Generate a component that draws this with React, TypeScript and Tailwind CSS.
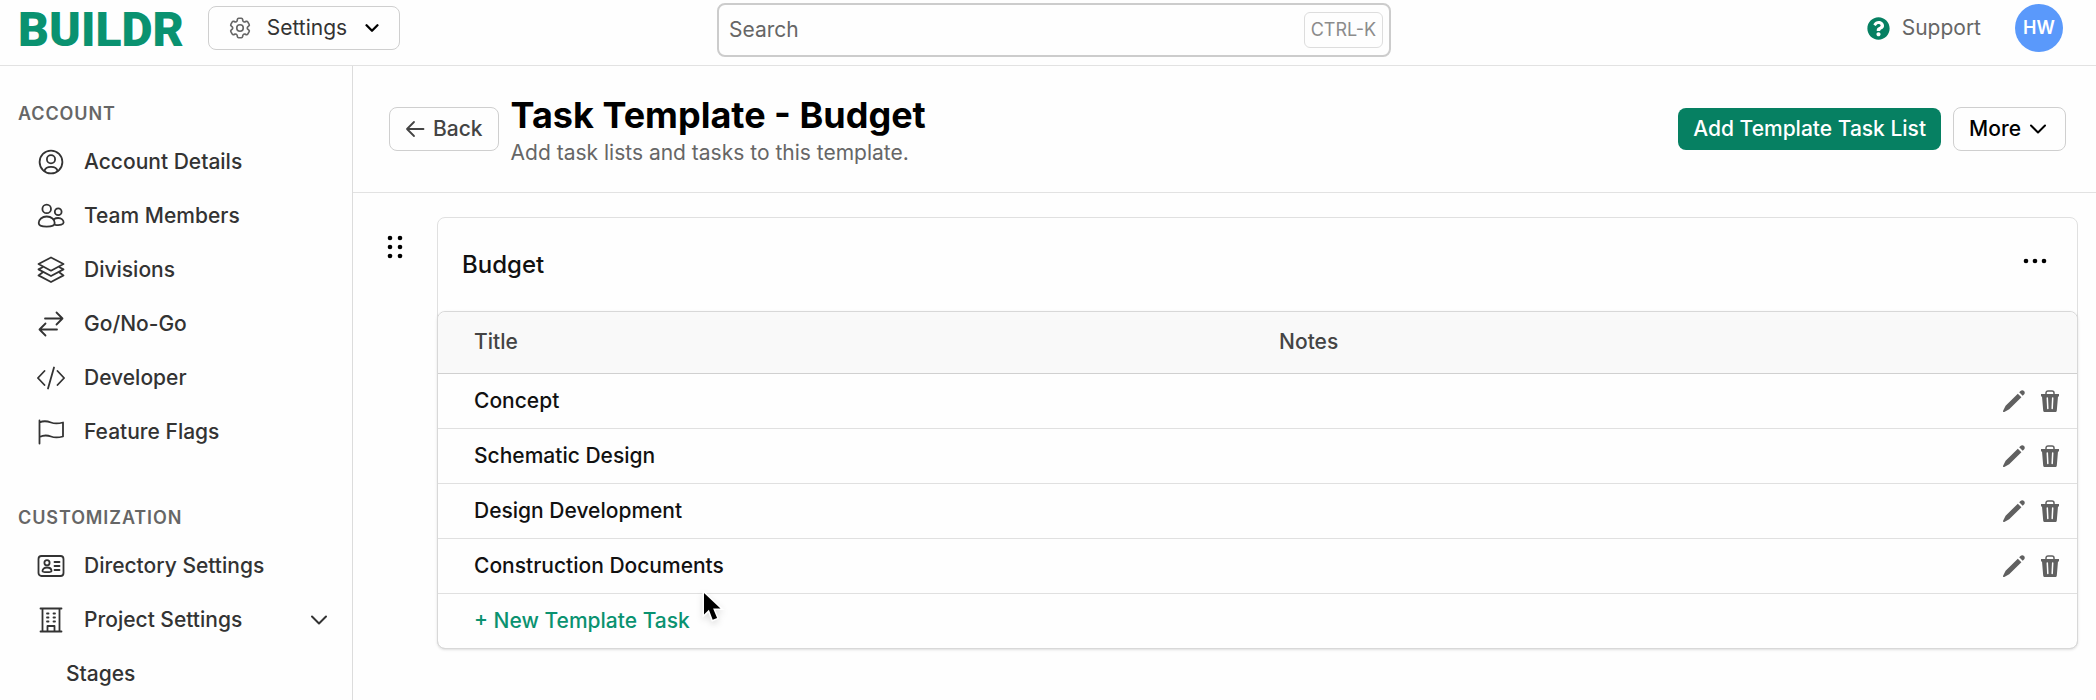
import { type ReactNode } from "react";
import { FaQuestionCircle } from "react-icons/fa";
import { HiOutlineCog6Tooth } from "react-icons/hi2";

interface NavItem {
  label: string;
  icon: ReactNode;
  expandable?: boolean;
}

interface IconProps {
  children: ReactNode;
}

function NavIcon({ children }: IconProps) {
  return (
    <svg
      viewBox="0 0 28 28"
      className="size-7 shrink-0"
      fill="none"
      stroke="currentColor"
      strokeWidth="1.8"
      strokeLinecap="round"
      strokeLinejoin="round"
      aria-hidden="true"
    >
      {children}
    </svg>
  );
}

function ChevronDown({ className }: { className: string }) {
  return (
    <svg
      viewBox="0 0 18 18"
      className={className}
      fill="none"
      stroke="currentColor"
      strokeLinecap="round"
      strokeLinejoin="round"
      aria-hidden="true"
    >
      <path d="M2 5.5l7 7 7-7" />
    </svg>
  );
}

const accountItems: NavItem[] = [
  {
    label: "Account Details",
    icon: (
      <NavIcon>
        <circle cx="14" cy="14" r="11.4" />
        <circle cx="14" cy="11.2" r="4.1" />
        <path d="M7.4 23c.6-2.7 3.2-4.2 6.6-4.2s6 1.5 6.6 4.2" />
      </NavIcon>
    ),
  },
  {
    label: "Team Members",
    icon: (
      <NavIcon>
        <circle cx="9.7" cy="6.9" r="4.3" />
        <circle cx="21.2" cy="9.7" r="3.4" />
        <path d="M9.7 14.5c-4.8 0-8 3-8 6.6 0 2.3 3.6 3.6 8 3.6s8-1.3 8-3.6c0-3.6-3.200-6.600-8-6.600z" />
        <path d="M16.8 17.3c1.2-.8 2.7-1.3 4.4-1.3 3.2 0 5.4 2.1 5.4 4.6 0 2-3.4 2.9-8.4 2.3" />
      </NavIcon>
    ),
  },
  {
    label: "Divisions",
    icon: (
      <NavIcon>
        <path d="M14 1.5L26.5 8 14 14.7 1.5 8z" />
        <path d="M5.5 11.2L1.5 13.400 14 20l12.500-6.600-4-2.200" />
        <path d="M5.5 16.6L1.5 19.400 14 26l12.500-6.600-4-2.800" />
      </NavIcon>
    ),
  },
  {
    label: "Go/No-Go",
    icon: (
      <NavIcon>
        <path d="M8 8.500h17.500M19.500 2.500l6 6-6 6" />
        <path d="M20 19.500H2.500M8.500 13.500l-6 6 6 6" />
      </NavIcon>
    ),
  },
  {
    label: "Developer",
    icon: (
      <NavIcon>
        <path d="M7.500 7L.9 14l6.600 7M20.500 7l6.600 7-6.600 7M17 3.500l-6 21" />
      </NavIcon>
    ),
  },
  {
    label: "Feature Flags",
    icon: (
      <NavIcon>
        <path d="M2.500 2.500v23M2.500 4.500c4-2 7.500-1.500 11.500 0s8 1 12 0v14c-4 1-8 1.500-12 0s-7.500-1.500-11.500.5" />
      </NavIcon>
    ),
  },
];

const customizationItems: NavItem[] = [
  {
    label: "Directory Settings",
    icon: (
      <NavIcon>
        <rect x="1.5" y="4" width="25" height="20" rx="3" />
        <circle cx="10" cy="10.7" r="2.6" />
        <path d="M10 15.500c-2.600 0-4.500 1.300-4.500 3.400 0 .9 2 1.200 4.500 1.200s4.500-.3 4.500-1.200c0-2.100-1.900-3.400-4.500-3.400z" />
        <path d="M17.500 10h5M17.500 14h5M17.500 18h5" />
      </NavIcon>
    ),
  },
  {
    label: "Project Settings",
    expandable: true,
    icon: (
      <NavIcon>
        <path d="M3.500 2.500h21M3.500 25.500h21M5.500 2.500v23M22.500 2.500v23M10.500 25v-5h7v5" />
        <path d="M10 7.500h1.500M16.500 7.500H18M10 11.500h1.500M16.500 11.500H18M10 15.500h1.500M16.500 15.500H18" />
      </NavIcon>
    ),
  },
];

const tasks = ["Concept", "Schematic Design", "Design Development", "Construction Documents"];

function NavSection({ title, items, children }: { title: string; items: NavItem[]; children?: ReactNode }) {
  return (
    <section>
      <h2 className="pl-[18px] text-lg leading-6 font-semibold tracking-wider text-[#666] uppercase">{title}</h2>
      <ul className="mt-[9px]">
        {items.map((item) => (
          <li key={item.label}>
            <a href="#" className="flex h-[54px] items-center gap-[19px] pr-6 pl-[37px]">
              {item.icon}
              <span className="flex-1">{item.label}</span>
              {item.expandable && <ChevronDown className="size-[18px] stroke-2" />}
            </a>
          </li>
        ))}
        {children}
      </ul>
    </section>
  );
}

function TopBar() {
  return (
    <header className="flex h-[66px] items-start border-b border-[#e2e2e2] pr-1.5 pl-[18px]">
      <div className="flex h-14 flex-1 items-center gap-6">
        <a href="#" className="pt-1 font-[Roboto,sans-serif] text-5xl leading-none font-black text-[#0a9270]">
          BUILDR
        </a>
        <button className="flex h-11 items-center rounded-lg border border-[#cfcfcf] pr-5 pl-[18px] text-[#333]">
          <HiOutlineCog6Tooth className="size-[26px] text-[#666]" />
          <span className="ml-3.5">Settings</span>
          <ChevronDown className="ml-[18px] size-3.5 stroke-3 text-black" />
        </button>
      </div>

      <div className="mt-[3px] flex h-[54px] w-[674px] items-center rounded-lg border-2 border-[#ccc] pr-1.5 pl-2.5">
        <input
          type="text"
          aria-label="Search"
          placeholder="Search"
          className="min-w-0 flex-1 bg-transparent outline-none placeholder:text-[#666]"
        />
        <kbd className="flex h-9 items-center rounded-md border border-[#ddd] px-1.5 font-[Inter,sans-serif] text-lg text-[#8c8c8c]">
          CTRL-K
        </kbd>
      </div>

      <div className="flex h-14 flex-1 items-center justify-end">
        <a href="#" className="flex items-center gap-3 text-[#666]">
          <FaQuestionCircle className="size-[23px] text-[#068062]" />
          Support
        </a>
        <button className="mr-[27px] ml-[34px] size-12 rounded-full bg-[#5a99fb] text-lg font-semibold text-white">
          HW
        </button>
      </div>
    </header>
  );
}

function Sidebar() {
  return (
    <nav className="w-[353px] shrink-0 space-y-[47px] border-r border-[#dcdcdc] pt-9 font-medium text-[#333]">
      <NavSection title="Account" items={accountItems} />
      <NavSection title="Customization" items={customizationItems}>
        <li>
          <a href="#" className="flex h-[54px] items-center pl-[66px]">
            Stages
          </a>
        </li>
      </NavSection>
    </nav>
  );
}

function PageHeader() {
  return (
    <div className="flex h-[127px] items-center gap-3 border-b border-[#e2e2e2] pr-[30px] pl-9">
      <button className="flex h-11 items-center gap-2 rounded-lg border border-[#cfcfcf] px-[15px] font-medium text-[#444]">
        <svg
          viewBox="0 0 20 20"
          className="size-5"
          fill="none"
          stroke="currentColor"
          strokeWidth="1.8"
          strokeLinecap="round"
          strokeLinejoin="round"
          aria-hidden="true"
        >
          <path d="M18.500 10H2M9 3l-7 7 7 7" />
        </svg>
        Back
      </button>
      <div className="flex-1 pt-1">
        <h1 className="text-4xl font-bold text-black">Task Template - Budget</h1>
        <p className="mt-1 text-[#666]">Add task lists and tasks to this template.</p>
      </div>
      <button className="h-[42px] rounded-lg bg-[#068062] px-[15px] font-medium text-white">
        Add Template Task List
      </button>
      <button className="flex h-11 items-center gap-2 rounded-lg border border-[#cfcfcf] pr-[18px] pl-[15px] font-medium text-black">
        More
        <ChevronDown className="size-[18px] stroke-2" />
      </button>
    </div>
  );
}

function PencilIcon() {
  return (
    <svg viewBox="0 0 24 24" className="size-6" fill="currentColor" aria-hidden="true">
      <path d="M15.800 4.700l3.600 3.600L7.200 20.300 2.300 22.900c-.8.400-1.600-.4-1.200-1.200l2.500-5z" />
      <path d="M17.200 3.300l1.300-1.300c1-1 2.500-1 3.500 0s1 2.500 0 3.500l-1.300 1.300z" />
    </svg>
  );
}

function TrashIcon() {
  return (
    <svg viewBox="0 0 20 24" className="h-6 w-5" aria-hidden="true">
      <path d="M6 5.500V4c0-1.300.8-2 2-2h4c1.200 0 2 .7 2 2v1.500" fill="none" stroke="currentColor" strokeWidth="1.5" />
      <path
        d="M1 5h18v2.500h-1l-1.200 14c-.1 1-.8 1.500-1.700 1.500H4.900c-.9 0-1.600-.5-1.700-1.500L2 7.500H1z"
        fill="currentColor"
      />
      <path d="M7.300 9l.5 10.500M12.700 9l-.5 10.500" stroke="#fefefe" strokeWidth="1.500" strokeLinecap="round" />
    </svg>
  );
}

function CursorIcon() {
  return (
    <svg
      viewBox="0 0 24 36"
      className="absolute -top-1 left-[264px] h-9 w-6 drop-shadow-md [paint-order:stroke]"
      stroke="white"
      strokeWidth="3"
      aria-hidden="true"
    >
      <path d="M2 3v21.500l4.900-4.700 3.800 10 4.400-1.800-4-9.500h7.400z" />
    </svg>
  );
}

function TaskListCard() {
  return (
    <section className="flex-1 rounded-lg border border-[#e0e0e0]">
      <div className="flex h-[93px] items-center justify-between pr-7 pl-6">
        <h2 className="text-2xl font-medium text-[#111]">Budget</h2>
        <button aria-label="Task list actions" className="mb-2">
          <svg viewBox="0 0 28 12" className="h-3 w-7" aria-hidden="true">
            <circle cx="5" cy="6" r="2.3" />
            <circle cx="14" cy="6" r="2.3" />
            <circle cx="23" cy="6" r="2.3" />
          </svg>
        </button>
      </div>

      <div className="-mx-px -mb-px rounded-lg border border-[#d8d8d8] shadow-sm">
        <table className="w-full table-fixed text-left font-medium">
          <thead>
            <tr className="h-[61px] border-b border-[#d0d0d0] bg-[#f9f9f9] text-[#444]">
              <th className="w-[49%] rounded-tl-lg pl-9 font-medium">Title</th>
              <th className="pl-[38px] font-medium">Notes</th>
              <th className="w-[100px] rounded-tr-lg" aria-label="Actions" />
            </tr>
          </thead>
          <tbody className="text-[#111]">
            {tasks.map((task) => (
              <tr key={task} className="h-[55px] border-b border-[#e0e0e0]">
                <td className="pl-9">{task}</td>
                <td />
                <td>
                  <div className="flex justify-end gap-3.5 pr-[17px] text-[#606060]">
                    <button aria-label={`Edit ${task}`}>
                      <PencilIcon />
                    </button>
                    <button aria-label={`Delete ${task}`}>
                      <TrashIcon />
                    </button>
                  </div>
                </td>
              </tr>
            ))}
          </tbody>
        </table>
        <div className="relative flex h-[54px] items-center pl-9 font-medium text-[#0a9270]">
          <button>+ New Template Task</button>
          <CursorIcon />
        </div>
      </div>
    </section>
  );
}

export default function App() {
  return (
    <div className="flex min-h-screen flex-col bg-[#fefefe] font-[Inter,sans-serif] text-[21px] leading-7">
      <TopBar />
      <div className="flex flex-1">
        <Sidebar />
        <main className="min-w-0 flex-1">
          <PageHeader />
          <div className="flex items-start pt-6 pr-[18px] pl-7">
            <button aria-label="Reorder task list" className="mt-4 mr-7">
              <svg viewBox="0 0 28 28" className="size-7" aria-hidden="true">
                <circle cx="9" cy="5" r="2.3" />
                <circle cx="19" cy="5" r="2.3" />
                <circle cx="9" cy="14" r="2.3" />
                <circle cx="19" cy="14" r="2.3" />
                <circle cx="9" cy="23" r="2.3" />
                <circle cx="19" cy="23" r="2.3" />
              </svg>
            </button>
            <TaskListCard />
          </div>
        </main>
      </div>
    </div>
  );
}
